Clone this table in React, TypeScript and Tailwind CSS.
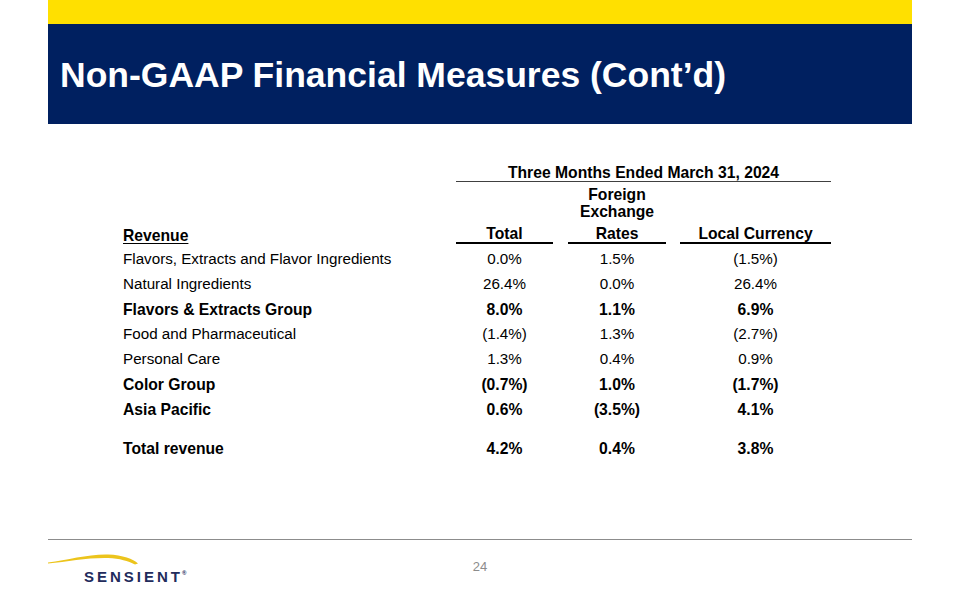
import React from 'react';

interface Row {
  label: string;
  total: string;
  fx: string;
  local: string;
  bold?: boolean;
}

const rows: Row[] = [
  { label: 'Flavors, Extracts and Flavor Ingredients', total: '0.0%', fx: '1.5%', local: '(1.5%)' },
  { label: 'Natural Ingredients', total: '26.4%', fx: '0.0%', local: '26.4%' },
  { label: 'Flavors & Extracts Group', total: '8.0%', fx: '1.1%', local: '6.9%', bold: true },
  { label: 'Food and Pharmaceutical', total: '(1.4%)', fx: '1.3%', local: '(2.7%)' },
  { label: 'Personal Care', total: '1.3%', fx: '0.4%', local: '0.9%' },
  { label: 'Color Group', total: '(0.7%)', fx: '1.0%', local: '(1.7%)', bold: true },
  { label: 'Asia Pacific', total: '0.6%', fx: '(3.5%)', local: '4.1%', bold: true },
];

function DataRow({ row }: { row: Row }) {
  return (
    <div className={`flex h-[25px] items-center ${row.bold ? 'text-[15.7px] font-bold' : 'text-[15.2px]'}`}>
      <div className="w-[333px]">{row.label}</div>
      <div className="w-[97px] text-center">{row.total}</div>
      <div className="ml-[15px] w-[98px] text-center">{row.fx}</div>
      <div className="ml-[14px] w-[151px] text-center">{row.local}</div>
    </div>
  );
}

function Logo() {
  return (
    <div className="flex flex-col">
      <svg width="92" height="18" viewBox="0 0 92 18">
        <path
          d="M0 12.5 C 20 10, 40 4, 60 4.5 C 75 5, 85 9, 90 13.5 L 87 14.5 C 80 11, 72 8.5, 60 8 C 40 7.5, 20 11.5, 0 13.6 Z"
          fill="#ecc41c"
        />
      </svg>
      <div className="ml-[36px] mt-[1px] flex items-start text-[15px] font-bold leading-[15px] tracking-[3px] text-[#222b5c]">
        SENSIENT
        <span className="ml-[-1px] text-[6px] leading-[8px] tracking-normal">®</span>
      </div>
    </div>
  );
}

export default function App() {
  return (
    <div className="flex h-[600px] w-[960px] flex-col bg-white font-['Liberation_Sans',Arial,sans-serif] text-black">
      {/* 헤더 */}
      <div className="mx-[48px] h-[24px] bg-[#ffe000]" />
      <div className="mx-[48px] h-[100px] bg-[#002060] pl-[12px] pt-[34px]">
        <h1 className="text-[35.5px] font-bold leading-none text-white">Non-GAAP Financial Measures (Cont’d)</h1>
      </div>

      {/* 표 */}
      <div className="pl-[123px] pt-[40px] text-[15.7px]">
        <div className="ml-[333px] w-[375px] border-b border-[#404040] text-center font-bold leading-[17px]">
          Three Months Ended March 31, 2024
        </div>
        <div className="mt-[4px] flex items-end font-bold leading-[17px]">
          <div className="w-[333px]">
            <span className="underline underline-offset-2">Revenue</span>
          </div>
          <div className="w-[97px] border-b-2 border-black text-center">Total</div>
          <div className="ml-[15px] flex w-[98px] flex-col border-b-2 border-black text-center">
            <span>Foreign</span>
            <span>Exchange</span>
            <span className="mt-[5px]">Rates</span>
          </div>
          <div className="ml-[14px] w-[151px] border-b-2 border-black text-center">Local Currency</div>
        </div>
        <div className="mt-[3px]">
          {rows.map((row) => (
            <DataRow key={row.label} row={row} />
          ))}
        </div>
        <div className="mt-[14px]">
          <DataRow row={{ label: 'Total revenue', total: '4.2%', fx: '0.4%', local: '3.8%', bold: true }} />
        </div>
      </div>

      {/* 푸터 */}
      <div className="mx-[48px] mt-auto h-[61px] border-t border-[#8c8c8c]">
        <div className="grid grid-cols-[1fr_auto_1fr] pt-[10px]">
          <Logo />
          <div className="mt-[9px] text-[13px] leading-[16px] text-[#8c8c8c]">24</div>
          <div />
        </div>
      </div>
    </div>
  );
}
